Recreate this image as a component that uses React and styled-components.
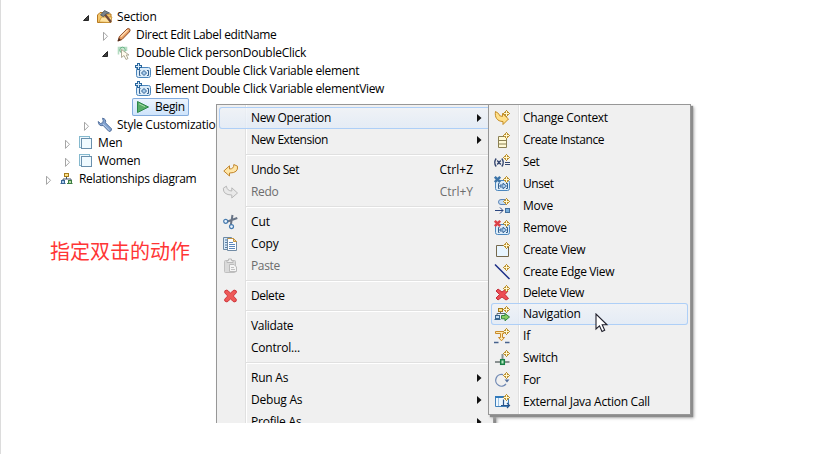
import React from "react";
import styled, { createGlobalStyle } from "styled-components";

const GlobalStyle = createGlobalStyle`
  * { box-sizing: border-box; }
  body { margin: 0; background: #fff; overflow: hidden; }
`;

const Page = styled.main`
  position: relative;
  width: 824px;
  height: 454px;
  border-left: 1px solid #dcdcdc;
  overflow: hidden;
  background: #fff;
  color: #000;
  font: 12px/18px "Open Sans", "Noto Sans", "Noto Sans CJK SC", sans-serif;
`;

const Tree = styled.div`
  display: flex;
  flex-direction: column;
  padding-top: 8px;
`;

const TreeRow = styled.div`
  display: flex;
  align-items: center;
  height: 18px;
  padding-left: ${(p) => 44 + p.$level * 19}px;
`;

const Twisty = styled.span`
  display: flex;
  width: 11px;
  height: 18px;
`;

const TreeItem = styled.div`
  display: flex;
  align-items: center;
  gap: 4px;
  height: 18px;
  padding: 0 4px 0 3px;
  border-radius: 2px;
  background: ${(p) => (p.$selected ? "linear-gradient(#eef5fe, #cde3fb)" : "none")};
  box-shadow: ${(p) => (p.$selected ? "inset 0 0 0 1px #84acdd" : "none")};
`;

const Label = styled.span`
  white-space: pre;
  letter-spacing: ${(p) => p.$ls ?? -0.2}px;
`;

const Menu = styled.div`
  position: absolute;
  display: flex;
  flex-direction: column;
  left: ${(p) => p.$x}px;
  top: 104px;
  width: ${(p) => p.$w}px;
  padding: 2px 2px 1px;
  border: 1px solid #979797;
  background: linear-gradient(90deg, #f0f0f0 ${(p) => p.$gutter}px, #e0e0e0 ${(p) => p.$gutter}px, #e0e0e0 ${(p) => p.$gutter + 1}px, #fff ${(p) => p.$gutter + 1}px, #fff ${(p) => p.$gutter + 2}px, #f0f0f0 ${(p) => p.$gutter + 2}px);
  background-clip: padding-box;
  box-shadow: 2px 2px 1px #8c8c8c, 3px 3px 3px #aaa;
`;

const MenuClip = styled.div`
  position: absolute;
  inset: 0 0 31px 0;
  overflow: hidden;
`;

const MenuItem = styled.div`
  display: flex;
  flex: none;
  align-items: center;
  height: ${(p) => p.$h ?? 22}px;
  padding: 0 ${(p) => (p.$sub ? 3 : 18)}px 0 ${(p) => (p.$sub ? 3 : 4)}px;
  border-radius: 3px;
  color: ${(p) => (p.$off ? "#6d6d6d" : "#000")};
  background: ${(p) => (p.$hot ? "linear-gradient(rgba(240,243,248,.75), rgba(224,234,247,.75))" : "none")};
  box-shadow: ${(p) => (p.$hot ? "inset 0 0 0 1px #aecff7" : "none")};
`;

const IconSlot = styled.span`
  display: flex;
  flex: none;
  width: ${(p) => (p.$sub ? 29 : 28)}px;
`;

const Shortcut = styled.span`
  margin-left: auto;
`;

const Chevron = styled.svg`
  margin-left: auto;
  margin-right: -9px;
`;

const Separator = styled.div`
  flex: none;
  height: 2px;
  margin: 3px 0 3px 27px;
  background: linear-gradient(#e0e0e0 50%, #fff 50%);
`;

const Note = styled.div`
  position: absolute;
  left: 49px;
  top: 237px;
  color: #ff3535;
  font: 20px/28px "Noto Sans CJK SC", sans-serif;
  white-space: nowrap;
`;

const Cursor = styled.svg`
  position: absolute;
  left: 594px;
  top: 313px;
`;

const Svg = styled.svg`
  display: block;
  flex: none;
  overflow: visible;
`;

const Icon = ({ children }) => (
  <Svg width="16" height="16" viewBox="0 0 16 16" fill="none">{children}</Svg>
);

const Star = () => (
  <g shapeRendering="crispEdges">
    <path d="M12 1h1v1h1v1h1v1h-1v1h-1v1h-1v-1h-1v-1h-1v-1h1v-1h1z" fill="#fff8d0" />
    <path
      d="M12 0h1v1h-1zM11 1h1v1h-1zM13 1h1v1h-1zM10 2h2v1h-2zM13 2h2v1h-2zM9 3h1v1h-1zM15 3h1v1h-1zM10 4h2v1h-2zM13 4h2v1h-2zM11 5h1v1h-1zM13 5h1v1h-1zM12 6h1v1h-1z"
      fill="#bd9130"
    />
  </g>
);

const Bracketed = () => (
  <>
    <rect x="1.5" y="4.5" width="14" height="10" rx="2" fill="#dcecf9" stroke="#4b86bd" />
    <path d="M5.5 7.5H4.5V12.5H5.5M12 7.5H13.5V12.5H12" stroke="#34608f" />
  </>
);

const Slot = () => (
  <>
    <Bracketed />
    <path d="M6 9H9V7.2L12.5 10L9 12.8V11H6Z" fill="#a9cdec" stroke="#315f92" strokeWidth=".9" />
  </>
);

const SmallX = ({ color }) => (
  <path d="M.8 .8L6.2 6.2M6.2 .8L.8 6.2" stroke={color} strokeWidth="2.5" />
);

const icons = {
  section: (
    <Icon>
      <path d="M.5 13.5V6L3 3.5H6L7 5H14V13.5Z" fill="#f4c66c" stroke="#b77820" />
      <path d="M2 13L4.5 8H15L13 13.5Z" fill="#ffe3a0" stroke="#c7912e" strokeWidth=".8" />
      <path d="M7.5 5L14 13" stroke="#6f4a3c" strokeWidth="2.3" />
      <path d="M3.5 6L7.5 1.5L12.5 4L9 4.8L6.5 7.7Z" fill="#79828a" stroke="#4a555c" strokeWidth=".8" />
    </Icon>
  ),
  pencil: (
    <Icon>
      <path d="M2 14L3.4 9.5L11 2Q12.5 .8 13.8 2.2Q14.6 3.6 13.3 5L6 12.5Z" fill="#e8a064" stroke="#8d4824" />
      <path d="M4.8 9.8L11.7 3" stroke="#ffdab1" strokeWidth="1.5" />
      <path d="M1.5 14.5L3 11L5 13Z" fill="#4b2a20" />
    </Icon>
  ),
  click: (
    <Icon>
      <path d="M2.5 9.5V2.5H10.5V6" stroke="#b5dcc2" strokeWidth="1.6" />
      <circle cx="6.5" cy="5" r="2.8" fill="#c9e9d2" stroke="#69b386" />
      <path d="M5.5 4.5V12.5L8 10.5L10 14.5L12 13.5L10.2 10H13Z" fill="#fffbed" stroke="#a8a48f" strokeWidth=".9" />
    </Icon>
  ),
  variable: (
    <Icon>
      <Bracketed />
      <path d="M6.5 10L9 7.5L11.5 10L9 12.5Z" fill="#a9cdec" stroke="#315f92" />
      <path d="M3.5 0V7M0 3.5H7" stroke="#28659c" strokeWidth="3" />
      <path d="M3.5 1V6M1 3.5H6" stroke="#d9ecfb" />
    </Icon>
  ),
  begin: (
    <Icon><path d="M2.5 2.5L13.5 8L2.5 13.5Z" fill="#57ad68" stroke="#2c864a" /><path d="M4 4.8L10 7.7" stroke="#a4d9a4" /></Icon>
  ),
  wrench: (
    <Icon>
      <path d="M5.5 1.2Q9.5 2 8.5 5.8L14.5 11.8Q14.8 14.5 12 14.5L6.2 8.5Q1.5 9.5 1.2 4.5L3.5 6.5L5.8 5.7L6.2 3.5Z" fill="#84a4d2" stroke="#56739f" />
      <path d="M6 7L12.5 13.2" stroke="#b9cee9" />
    </Icon>
  ),
  sheets: (
    <Icon>
      <rect x="1.5" y="1.5" width="10" height="11" fill="#eef8fd" stroke="#85b9ce" />
      <rect x="3.5" y="3.5" width="10" height="10" fill="#f0faff" stroke="#6a8fac" />
    </Icon>
  ),
  diagram: (
    <Icon>
      <path d="M7.5 5V8M4 10V8H12V10" stroke="#455468" />
      <rect x="5.5" y="2.5" width="4" height="3" fill="#ffe48a" stroke="#a67c1b" />
      <rect x="2.5" y="9.5" width="3" height="3" fill="#a9cbed" stroke="#386594" />
      <rect x="9.5" y="9.5" width="3" height="3" fill="#b7dea4" stroke="#3c7c43" />
      <path d="M1.5 12.5H6.5" stroke="#386594" />
      <path d="M8 12.5H13.5" stroke="#3c7c43" />
    </Icon>
  ),
  undo: (
    <Icon><path d="M.8 9L6.5 3.8V7Q11 7 10.8 2.5L14.5 4.2Q15.5 11 6.5 11V14Z" fill="#ffe6a7" stroke="#c2862d" /></Icon>
  ),
  redo: (
    <Icon><path d="M14.5 9L8.8 3.8V7Q4.2 7 3.4 2.2L.3 4.2Q0 11 8.8 11V14Z" fill="#e9e9e9" stroke="#b8b8b8" /></Icon>
  ),
  cut: (
    <Icon>
      <path d="M9.5 1L7.8 11M14.3 4L4.5 7.5" stroke="#687486" strokeWidth="2" />
      <circle cx="2.7" cy="7.3" r="2" fill="#eaf4ff" stroke="#477bae" strokeWidth="1.2" />
      <circle cx="8.5" cy="12.6" r="2" fill="#eaf4ff" stroke="#477bae" strokeWidth="1.2" />
    </Icon>
  ),
  copy: (
    <Icon>
      <path d="M.5 1.5H8.5V13.5H.5Z" fill="#d7e8f7" stroke="#6d8aa5" />
      <path d="M2 4H4M2 6.5H4M2 9H4M2 11.5H4" stroke="#557ba3" />
      <path d="M4.5 2.5H10.5L13.5 5.5V14.5H4.5Z" fill="#fff" stroke="#728ca5" />
      <path d="M4.5 2.5H10.5L13.5 5.5" stroke="#c39443" />
      <path d="M10.5 2.5V5.5H13.5Z" fill="#f6daa2" stroke="#c39443" />
      <path d="M6 6.5H10M6 8.5H12M6 10.5H12M6 12.5H12" stroke="#5d88bc" />
    </Icon>
  ),
  paste: (
    <Icon>
      <rect x="1.5" y="2.5" width="11" height="12" rx="1" fill="#dadada" stroke="#c0c0c0" />
      <path d="M4 4.5V2.5H5.5V1H8.5V2.5H10V4.5Z" fill="#eee" stroke="#b8b8b8" />
      <path d="M6.5 6.5H11L13.5 9V13.5H6.5Z" fill="#f5f5f5" stroke="#bbb" />
      <path d="M8 9.5H11M8 11.5H12" stroke="#c1c1c1" />
    </Icon>
  ),
  del: (
    <Icon>
      <path d="M4 2L7.5 5L11 2Q14.5 2.5 13.3 4.8L10.3 8L13.3 11.2Q14 14 11 14L7.5 11L4 14Q.8 13.5 1.7 11.2L4.7 8L1.7 4.8Q1 2 4 2Z" fill="#ee5a58" stroke="#d03a40" />
    </Icon>
  ),
  context: (
    <Icon>
      <path d="M1.5 1.5L4.5 3.5Q5 6.5 8.5 6.5V3.5L14.5 9L9 14.5V11.5C3 11.5 .5 7 1.5 1.5Z" fill="#ffe08a" stroke="#c48b22" /><Star />
    </Icon>
  ),
  instance: (
    <Icon>
      <path d="M4.5 4.5H12.5V15.5H4.5ZM4.5 8.5H12.5M4.5 12H12.5" fill="#fff9d5" stroke="#8b8054" /><Star />
    </Icon>
  ),
  set: (
    <Icon>
      <path d="M2.2 4.5Q-.8 8.5 2.2 12.5M7.8 4.5Q10.8 8.5 7.8 12.5M3.2 6.5L6.8 10.5M6.8 6.5L3.2 10.5" stroke="#34466f" strokeWidth="1.4" />
      <path d="M11 8.5H16M11 10.5H16" stroke="#34466f" /><Star />
    </Icon>
  ),
  unset: <Icon><Slot /><SmallX color="#3c74a8" /><Star /></Icon>,
  move: (
    <Icon>
      <rect x="4.5" y="1.5" width="9" height="5" rx="2.5" fill="#c4dcf4" stroke="#5c84b5" />
      <path d="M1 12.5H9M6 9.5L9 12.5L6 15.5" stroke="#2b4680" />
      <rect x="11.5" y="10.5" width="4" height="4" fill="#78aeda" stroke="#426f9f" /><Star />
    </Icon>
  ),
  remove: <Icon><Slot /><SmallX color="#dd4147" /><Star /></Icon>,
  view: <Icon><path d="M2.5 3.5H14.5V14.5H2.5Z" fill="#e8f5ff" stroke="#75684c" /><Star /></Icon>,
  edge: <Icon><path d="M1 .5L15.5 15" stroke="#1b2e86" strokeWidth="1.5" /><Star /></Icon>,
  delView: (
    <Icon>
      <path d="M4 4L8 7L12 4L14 6L11 9.5L14.5 13.5L12 15L8 12L4 15L2 13L5.5 9.5L2 6Z" fill="#ed4d54" stroke="#c52f3a" /><Star />
    </Icon>
  ),
  navigation: (
    <Icon>
      <path d="M6.5 5V8M3 10V7.5H11" stroke="#606970" />
      <rect x="4.5" y="2.5" width="4" height="3" fill="#ffe284" stroke="#a67a1c" />
      <rect x="1.5" y="9.5" width="4" height="3" fill="#c2dcf5" stroke="#38658d" />
      <path d="M.5 13.5H6.5" stroke="#38658d" />
      <path d="M7.5 9.5H11V7.5L15.5 11L11 14.8V12.8H7.5Z" fill="#85cc62" stroke="#338441" /><Star />
    </Icon>
  ),
  branch: (
    <Icon>
      <path d="M1.5 3.5H10V5.5H8.5V9.5H10.5L7.5 12.8L4.5 9.5H6.5V5.5H1.5Z" fill="#ffe9ae" stroke="#c98b2a" />
      <path d="M0 14.5H4.5M11 14.5H15.5" stroke="#45618c" strokeWidth="1.4" /><Star />
    </Icon>
  ),
  switch: (
    <Icon>
      <path d="M1 12H15.5M8.5 4V11" stroke="#8a9191" strokeWidth="2" />
      <rect x="6.7" y="9.7" width="3.6" height="4.6" fill="#b9ebc4" stroke="#178044" strokeWidth="1.5" /><Star />
    </Icon>
  ),
  loop: (
    <Icon>
      <path d="M9 2.7A5.8 5.8 0 1 0 12 12" stroke="#7089b4" strokeWidth="1.3" />
      <path d="M10.5 7.5H15.5L13 10.5Z" fill="#536f9d" /><Star />
    </Icon>
  ),
  java: (
    <Icon>
      <path d="M1.5 2.5H14.5V12.5H1.5Z" fill="#edf7ff" stroke="#4080ba" />
      <path d="M1 3H10" stroke="#327bbc" strokeWidth="2" />
      <path d="M4.5 4V12" stroke="#9cc3e4" />
      <path d="M9.5 5.5V11.5M7 11.5H15.5M13 9L15.5 11.5L13 14" stroke="#28558c" strokeWidth="1.2" /><Star />
    </Icon>
  ),
};

const treeRows = [
  { level: 2, icon: "section", text: "Section", open: true },
  { level: 3, icon: "pencil", text: "Direct Edit Label editName", open: false, ls: -0.33 },
  { level: 3, icon: "click", text: "Double Click personDoubleClick", open: true, ls: -0.25 },
  { level: 4, icon: "variable", text: "Element Double Click Variable element", ls: -0.32 },
  { level: 4, icon: "variable", text: "Element Double Click Variable elementView", ls: -0.32 },
  { level: 4, icon: "begin", text: "Begin", selected: true, ls: -0.3 },
  { level: 2, icon: "wrench", text: "Style Customizations", open: false, ls: -0.24 },
  { level: 1, icon: "sheets", text: "Men", open: false, ls: -0.1 },
  { level: 1, icon: "sheets", text: "Women", open: false, ls: -0.25 },
  { level: 0, icon: "diagram", text: "Relationships diagram", open: false, ls: -0.33 },
];

const mainItems = [
  { text: "New Operation", more: true, hot: true, ls: -0.4 },
  { text: "New Extension", more: true, ls: -0.45 },
  null,
  { text: "Undo Set", icon: "undo", keys: "Ctrl+Z", ls: -0.42 },
  { text: "Redo", icon: "redo", keys: "Ctrl+Y", off: true, ls: -0.35 },
  null,
  { text: "Cut", icon: "cut", ls: -0.1 },
  { text: "Copy", icon: "copy", ls: -0.1 },
  { text: "Paste", icon: "paste", off: true, ls: -0.35 },
  null,
  { text: "Delete", icon: "del", ls: -0.45 },
  null,
  { text: "Validate", ls: -0.33 },
  { text: "Control...", ls: -0.22 },
  null,
  { text: "Run As", more: true, ls: -0.22 },
  { text: "Debug As", more: true, ls: -0.22 },
  { text: "Profile As", more: true, ls: -0.22 },
];

const operations = [
  { text: "Change Context", icon: "context", ls: -0.3 },
  { text: "Create Instance", icon: "instance", ls: -0.41 },
  { text: "Set", icon: "set", ls: -0.4 },
  { text: "Unset", icon: "unset", ls: -0.45 },
  { text: "Move", icon: "move", ls: -0.2 },
  { text: "Remove", icon: "remove", ls: -0.25 },
  { text: "Create View", icon: "view", ls: -0.37 },
  { text: "Create Edge View", icon: "edge", h: 21, ls: -0.34 },
  { text: "Delete View", icon: "delView", h: 21, ls: -0.42 },
  { text: "Navigation", icon: "navigation", hot: true, ls: -0.22 },
  { text: "If", icon: "branch", ls: -0.1 },
  { text: "Switch", icon: "switch", ls: -0.25 },
  { text: "For", icon: "loop", ls: -0.3 },
  { text: "External Java Action Call", icon: "java", ls: -0.26 },
];

const Toggle = ({ open }) => (
  <Svg width="9" height="18" viewBox="0 0 9 18">
    {open
      ? <path d="M5.5 7.5V12.5H.5Z" fill="#404040" stroke="#262626" />
      : <path d="M1.5 6.2L5.5 10.3L1.5 14.4Z" fill="#fff" stroke="#a5a5a5" />}
  </Svg>
);

export default function App() {
  return (
    <Page>
      <GlobalStyle />
      <Tree>
        {treeRows.map((row) => (
          <TreeRow key={row.text} $level={row.level}>
            <Twisty>{row.open !== undefined && <Toggle open={row.open} />}</Twisty>
            <TreeItem $selected={row.selected}>
              {icons[row.icon]}
              <Label $ls={row.ls}>{row.text}</Label>
            </TreeItem>
          </TreeRow>
        ))}
      </Tree>
      <Note>指定双击的动作</Note>
      <MenuClip>
        <Menu $x={215} $w={278} $gutter={28}>
          {mainItems.map((item, i) => item === null ? <Separator key={i} /> : (
            <MenuItem key={item.text} $hot={item.hot} $off={item.off}>
              <IconSlot>{icons[item.icon]}</IconSlot>
              <Label $ls={item.ls}>{item.text}</Label>
              {item.keys && <Shortcut>{item.keys}</Shortcut>}
              {item.more && <Chevron width="5" height="8" viewBox="0 0 5 8"><path d="M0 0L4.5 4L0 8Z" fill="#111" /></Chevron>}
            </MenuItem>
          ))}
        </Menu>
      </MenuClip>
      <Menu $x={487} $w={203} $gutter={29}>
        {operations.map((item) => (
          <MenuItem key={item.text} $sub $hot={item.hot} $h={item.h}>
            <IconSlot $sub>{icons[item.icon]}</IconSlot>
            <Label $ls={item.ls}>{item.text}</Label>
          </MenuItem>
        ))}
      </Menu>
      <Cursor width="14" height="21" viewBox="0 0 14 21">
        <path d="M1 1V16L4.5 12.8L7 18.5L9.7 17.3L7.2 11.8H12Z" fill="#fff" stroke="#20202c" strokeWidth="1.1" />
      </Cursor>
    </Page>
  );
}
